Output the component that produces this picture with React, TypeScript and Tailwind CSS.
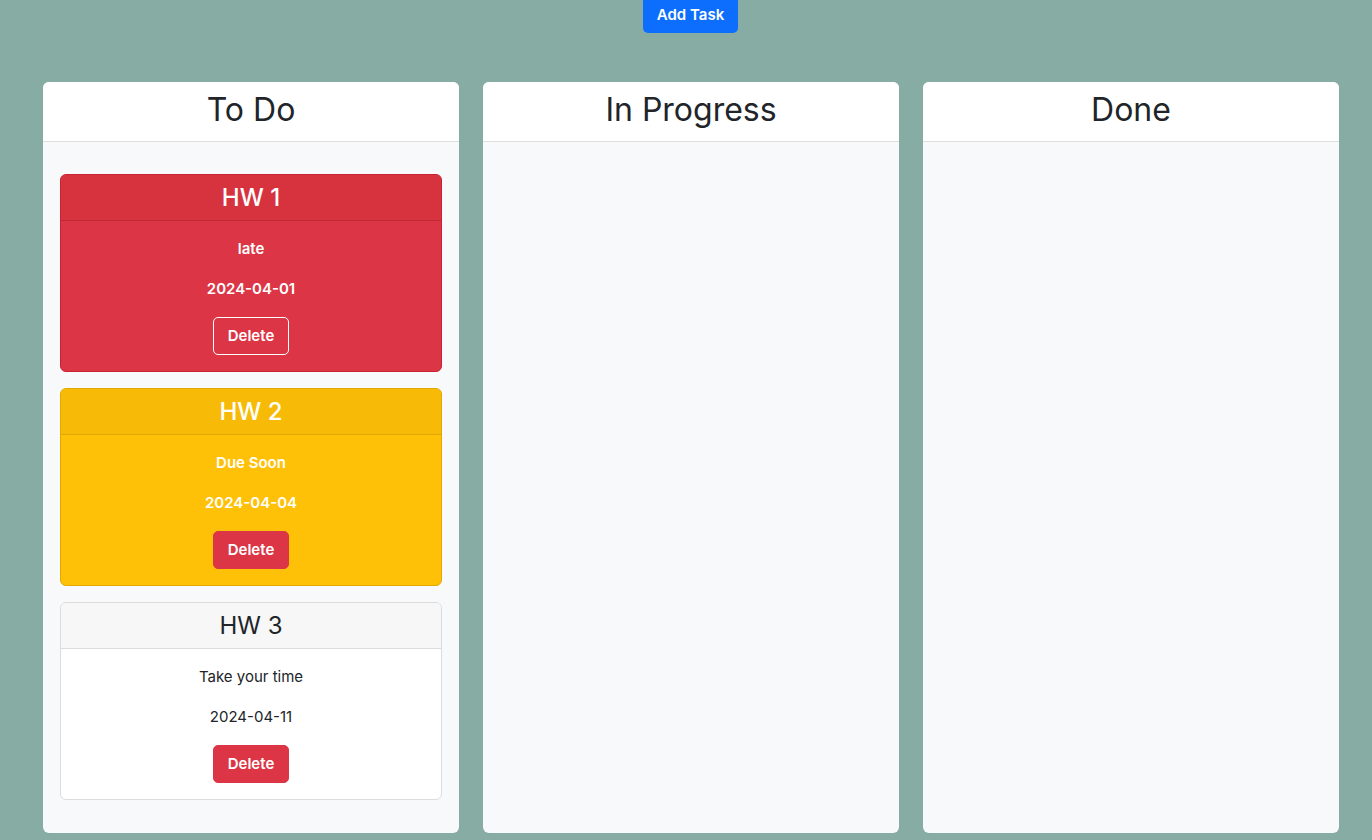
import React from "react";

type Task = {
  title: string;
  desc: string;
  date: string;
  variant: "red" | "yellow" | "white";
};

const tasks: Task[] = [
  { title: "HW 1", desc: "late", date: "2024-04-01", variant: "red" },
  { title: "HW 2", desc: "Due Soon", date: "2024-04-04", variant: "yellow" },
  { title: "HW 3", desc: "Take your time", date: "2024-04-11", variant: "white" },
];

function TaskCard({ t }: { t: Task }) {
  const card =
    t.variant === "red"
      ? "bg-[#dc3545] border-[#c82333] text-white"
      : t.variant === "yellow"
      ? "bg-[#ffc107] border-[#e0a800] text-white"
      : "bg-white border-[#dcdcdc] text-[#212529]";
  const header =
    t.variant === "red"
      ? "bg-[#d6333f] border-[#c02a36] font-medium"
      : t.variant === "yellow"
      ? "bg-[#f7bb07] border-[#dfa806] font-medium"
      : "bg-[#f7f7f7] border-[#dcdcdc] font-normal";
  const body = t.variant === "white" ? "font-normal" : "font-semibold";
  const btn =
    t.variant === "red"
      ? "border border-white bg-transparent"
      : "bg-[#dc3545] border border-[#dc3545]";
  return (
    <div className={`rounded-[6px] border ${card}`}>
      <div className={`h-[46px] flex items-center justify-center border-b text-[24px] leading-none rounded-t-[5px] ${header}`}>
        {t.title}
      </div>
      <div className={`flex flex-col items-center p-4 text-[15px] ${body}`}>
        <p className="leading-6 mb-4">{t.desc}</p>
        <p className="leading-6 mb-4">{t.date}</p>
        <button className={`h-[38px] w-[76px] rounded-[5px] text-white font-semibold text-[15px] ${btn}`}>
          Delete
        </button>
      </div>
    </div>
  );
}

function Column({ title, children }: { title: string; children?: React.ReactNode }) {
  return (
    <div className="w-[416px] h-[751px] bg-[#f8f9fa] rounded-[6px] flex flex-col overflow-hidden">
      <div className="h-[60px] bg-white border-b border-[#dedede] flex items-center justify-center shrink-0">
        <h2 className="text-[32px] leading-none text-[#212529] font-normal -mt-[3px]">{title}</h2>
      </div>
      <div className="flex flex-col gap-4 px-[17px] pt-8">{children}</div>
    </div>
  );
}

export default function App() {
  return (
    <div
      className="w-[1372px] h-[840px] bg-[#87aca3] overflow-hidden"
      style={{ fontFamily: "Inter, 'Noto Sans', sans-serif" }}
    >
      <div className="flex justify-center">
        <button className="ml-[9px] h-[33px] w-[95px] bg-[#0d6efd] text-white text-[15px] font-semibold rounded-b-[5px] pb-[2px]">
          Add Task
        </button>
      </div>
      <div className="flex gap-6 pl-[43px] mt-[49px]">
        <Column title="To Do">
          {tasks.map((t) => (
            <TaskCard key={t.title} t={t} />
          ))}
        </Column>
        <Column title="In Progress" />
        <Column title="Done" />
      </div>
    </div>
  );
}
